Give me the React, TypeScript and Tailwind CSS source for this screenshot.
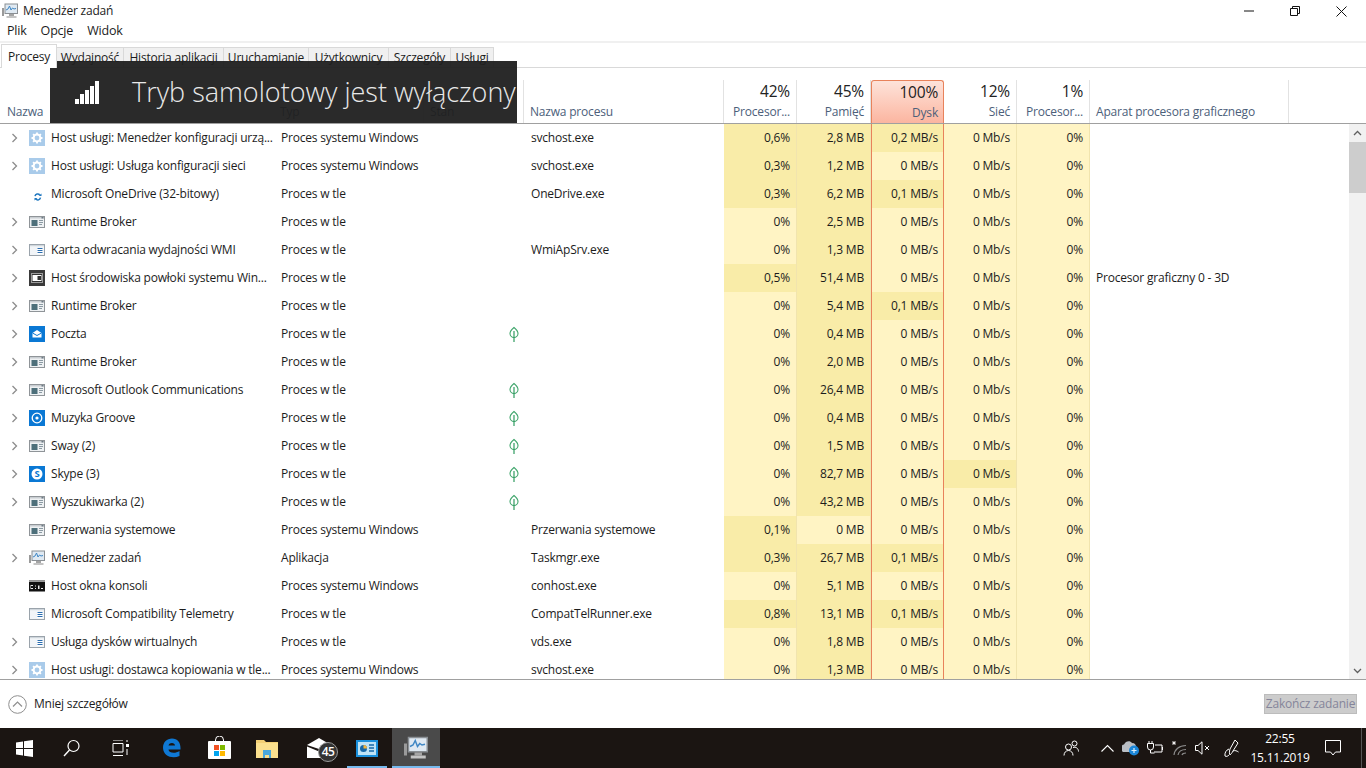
import React from 'react';

type Row = {
  name: string;
  type: string;
  leaf?: boolean;
  proc?: string;
  cpu: string;
  mem: string;
  disk: string;
  netHot?: boolean;
  gpu?: string;
  icon: string;
  arrow?: boolean;
};

const rows: Row[] = [
  { name: 'Host usługi: Menedżer konfiguracji urzą...', type: 'Proces systemu Windows', proc: 'svchost.exe', cpu: '0,6%', mem: '2,8 MB', disk: '0,2 MB/s', icon: 'gear', arrow: true },
  { name: 'Host usługi: Usługa konfiguracji sieci', type: 'Proces systemu Windows', proc: 'svchost.exe', cpu: '0,3%', mem: '1,2 MB', disk: '0 MB/s', icon: 'gear', arrow: true },
  { name: 'Microsoft OneDrive (32-bitowy)', type: 'Proces w tle', proc: 'OneDrive.exe', cpu: '0,3%', mem: '6,2 MB', disk: '0,1 MB/s', icon: 'sync' },
  { name: 'Runtime Broker', type: 'Proces w tle', cpu: '0%', mem: '2,5 MB', disk: '0 MB/s', icon: 'win', arrow: true },
  { name: 'Karta odwracania wydajności WMI', type: 'Proces w tle', proc: 'WmiApSrv.exe', cpu: '0%', mem: '1,3 MB', disk: '0 MB/s', icon: 'wmi', arrow: true },
  { name: 'Host środowiska powłoki systemu Win...', type: 'Proces w tle', cpu: '0,5%', mem: '51,4 MB', disk: '0 MB/s', gpu: 'Procesor graficzny 0 - 3D', icon: 'shell', arrow: true },
  { name: 'Runtime Broker', type: 'Proces w tle', cpu: '0%', mem: '5,4 MB', disk: '0,1 MB/s', icon: 'win', arrow: true },
  { name: 'Poczta', type: 'Proces w tle', leaf: true, cpu: '0%', mem: '0,4 MB', disk: '0 MB/s', icon: 'mail', arrow: true },
  { name: 'Runtime Broker', type: 'Proces w tle', cpu: '0%', mem: '2,0 MB', disk: '0 MB/s', icon: 'win', arrow: true },
  { name: 'Microsoft Outlook Communications', type: 'Proces w tle', leaf: true, cpu: '0%', mem: '26,4 MB', disk: '0 MB/s', icon: 'win', arrow: true },
  { name: 'Muzyka Groove', type: 'Proces w tle', leaf: true, cpu: '0%', mem: '0,4 MB', disk: '0 MB/s', icon: 'groove', arrow: true },
  { name: 'Sway (2)', type: 'Proces w tle', leaf: true, cpu: '0%', mem: '1,5 MB', disk: '0 MB/s', icon: 'win', arrow: true },
  { name: 'Skype (3)', type: 'Proces w tle', leaf: true, cpu: '0%', mem: '82,7 MB', disk: '0 MB/s', netHot: true, icon: 'skype', arrow: true },
  { name: 'Wyszukiwarka (2)', type: 'Proces w tle', leaf: true, cpu: '0%', mem: '43,2 MB', disk: '0 MB/s', icon: 'win', arrow: true },
  { name: 'Przerwania systemowe', type: 'Proces systemu Windows', proc: 'Przerwania systemowe', cpu: '0,1%', mem: '0 MB', disk: '0 MB/s', icon: 'win' },
  { name: 'Menedżer zadań', type: 'Aplikacja', proc: 'Taskmgr.exe', cpu: '0,3%', mem: '26,7 MB', disk: '0,1 MB/s', icon: 'taskmgr', arrow: true },
  { name: 'Host okna konsoli', type: 'Proces systemu Windows', proc: 'conhost.exe', cpu: '0%', mem: '5,1 MB', disk: '0 MB/s', icon: 'console' },
  { name: 'Microsoft Compatibility Telemetry', type: 'Proces w tle', proc: 'CompatTelRunner.exe', cpu: '0,8%', mem: '13,1 MB', disk: '0,1 MB/s', icon: 'wmi' },
  { name: 'Usługa dysków wirtualnych', type: 'Proces w tle', proc: 'vds.exe', cpu: '0%', mem: '1,8 MB', disk: '0 MB/s', icon: 'wmi', arrow: true },
  { name: 'Host usługi: dostawca kopiowania w tle...', type: 'Proces systemu Windows', proc: 'svchost.exe', cpu: '0%', mem: '1,3 MB', disk: '0 MB/s', icon: 'gear', arrow: true },
];

const tabs = ['Wydajność', 'Historia aplikacji', 'Uruchamianie', 'Użytkownicy', 'Szczegóły', 'Usługi'];
const tabWidths = ['w-[67px]', 'w-[100px]', 'w-[85px]', 'w-[80px]', 'w-[62px]', 'w-[43px]'];

const gridCols = 'grid grid-cols-[274px_150px_100px_200px_73px_74px_73px_73px_73px_199px_1fr]';

const TaskmgrIcon = ({ size = 16 }: { size?: number }) => (
  <svg width={size} height={size} viewBox="0 0 16 16">
    <rect x="0" y="5" width="2" height="8" fill="#9a9a9a" />
    <rect x="3" y="1" width="12.5" height="9.5" fill="#dfe9f2" stroke="#8a8f94" />
    <path d="M4 7l2-1 1.5-3 1.5 4 1.5-2 1.5 1 2-.5" fill="none" stroke="#3f87c5" strokeWidth="1" />
    <rect x="7" y="11" width="5" height="2" fill="#a5a5a5" />
    <rect x="4.5" y="13" width="10" height="2" fill="#c4c4c4" />
  </svg>
);

const RowIcon = ({ kind }: { kind: string }) => {
  if (kind === 'gear')
    return (
      <svg width="16" height="16" viewBox="0 0 16 16">
        <rect width="16" height="16" fill="#a9cbea" />
        <circle cx="8" cy="8" r="3.4" fill="none" stroke="#fff" strokeWidth="2" />
        <path d="M8 2.5v2M8 11.5v2M2.500 8h2M11.500 8h2M4.100 4.100l1.400 1.400M10.500 10.500l1.400 1.400M4.100 11.900l1.400-1.400M10.500 5.500l1.400-1.400" stroke="#fff" strokeWidth="1.800" />
      </svg>
    );
  if (kind === 'sync')
    return (
      <svg width="16" height="16" viewBox="0 0 16 16">
        <path d="M6 10.200a2.800 2.800 0 0 1 4.800-1.400" fill="none" stroke="#1f77c0" strokeWidth="1.500" />
        <path d="M12 12.200a2.800 2.800 0 0 1-4.800 1.400" fill="none" stroke="#1f77c0" strokeWidth="1.500" transform="translate(-.5 -.5)" />
        <path d="M9.500 10h3V7.500zM8.500 12h-3v2.500z" fill="#1f77c0" />
      </svg>
    );
  if (kind === 'win')
    return (
      <svg width="16" height="16" viewBox="0 0 16 16">
        <rect x=".5" y="2.500" width="15" height="11" fill="#eef1f3" stroke="#8f9498" />
        <rect x="1" y="3" width="14" height="1.500" fill="#c9ced2" />
        <rect x="2.500" y="6" width="6" height="6" fill="#4d6f7a" />
        <path d="M10 6.500h4M10 8.500h4M10 10.500h3" stroke="#8b9aa3" />
        <rect x="12.500" y="3" width="2" height="1.500" fill="#6c7a84" />
      </svg>
    );
  if (kind === 'wmi')
    return (
      <svg width="16" height="16" viewBox="0 0 16 16">
        <rect x=".5" y="2.500" width="15" height="11" fill="#f2f5f8" stroke="#9aa3ab" />
        <rect x="1" y="3" width="14" height="1.200" fill="#cfd6dc" />
        <rect x="8" y="6" width="5.500" height="6" fill="#fff" />
        <path d="M8.500 6.500h5M8.500 8.500h5M8.500 10.500h5" stroke="#2a6db0" strokeWidth="1.200" />
      </svg>
    );
  if (kind === 'shell')
    return (
      <svg width="16" height="16" viewBox="0 0 16 16">
        <rect width="16" height="16" fill="#3a3a3a" />
        <rect x="2" y="3.500" width="12" height="9" fill="#fff" />
        <rect x="3" y="4.500" width="10" height="7" fill="none" stroke="#333" />
        <rect x="8.500" y="6" width="3.500" height="4" fill="#333" />
      </svg>
    );
  if (kind === 'mail')
    return (
      <svg width="16" height="16" viewBox="0 0 16 16">
        <rect width="16" height="16" fill="#0a78d4" />
        <path d="M3.500 7l4.500-3 4.500 3v4.500h-9z" fill="#fff" />
        <path d="M3.500 7L8 9.500 12.500 7" fill="none" stroke="#0a78d4" />
      </svg>
    );
  if (kind === 'groove')
    return (
      <svg width="16" height="16" viewBox="0 0 16 16">
        <rect width="16" height="16" fill="#0a78d4" />
        <circle cx="8" cy="8" r="4.800" fill="none" stroke="#fff" strokeWidth="1.300" />
        <circle cx="8" cy="8" r="1.600" fill="#fff" />
      </svg>
    );
  if (kind === 'skype')
    return (
      <svg width="16" height="16" viewBox="0 0 16 16">
        <rect width="16" height="16" fill="#0a78d4" />
        <circle cx="8" cy="8" r="5.500" fill="#fff" />
        <text x="8" y="11.300" textAnchor="middle" fontSize="9.500" fontWeight="700" fontFamily="'Open Sans', sans-serif" fill="#0a78d4">S</text>
      </svg>
    );
  if (kind === 'console')
    return (
      <svg width="16" height="16" viewBox="0 0 16 16">
        <rect y="2.500" width="16" height="11" fill="#111" />
        <rect y="2.500" width="16" height="1.500" fill="#9b9b9b" />
        <path d="M2 7h2v1H2v2h2v1H1.500V7zM6 7.500h1v1H6zM6 10h1v1H6zM9 7.500h1.500v3.500H9zM12 10h2v1h-2z" fill="#e8e8e8" />
      </svg>
    );
  return <TaskmgrIcon />;
};

const Leaf = () => (
  <svg width="12" height="17" viewBox="0 0 12 17">
    <path d="M6 1.500C8.500 3.500 10 5.500 10 7.500 10 10 8 11.500 6 11.500S2 10 2 7.500C2 5.500 3.500 3.500 6 1.500z" fill="none" stroke="#3fa56b" strokeWidth="1.100" />
    <path d="M6 5v11" stroke="#2f9b5f" strokeWidth="1.200" />
  </svg>
);

const Chevron = () => (
  <svg width="7" height="10" viewBox="0 0 7 10">
    <path d="M1.500 1l4 4-4 4" fill="none" stroke="#8c8c8c" strokeWidth="1.300" />
  </svg>
);

const Head = ({ pct, label, hot }: { pct: string; label: string; hot?: boolean }) => (
  <div
    className={
      hot
        ? 'flex h-[43px] flex-col items-end rounded-t-[3px] border border-b-0 border-[#e8825b] bg-gradient-to-b from-[#fde3da] to-[#fbb5a0] pr-[5px]'
        : 'flex h-[43px] flex-col items-end border-r border-[#e2e2e2] pr-[6px]'
    }
  >
    <span className="text-[15.500px] leading-[22px] text-[#222]">{pct}</span>
    <span className="mt-[1px] text-[12px] leading-[17px] text-[#4c607a]">{label}</span>
  </div>
);

const Label = ({ text, left }: { text: string; left?: boolean }) => (
  <div className={left ? 'flex h-[43px] items-end pb-[3px] pl-[7px] text-[12px] leading-[17px] text-[#4c607a]' : 'flex h-[43px] items-end border-r border-[#e2e2e2] pb-[3px] pl-[6px] text-[12px] leading-[17px] text-[#4c607a]'}>
    {text}
  </div>
);

const Heat = ({ value, dark, disk }: { value: string; dark: boolean; disk?: boolean }) => (
  <div
    className={`flex items-center justify-end ${dark ? 'bg-[#f9eca8]' : 'bg-[#fff4c4]'} ${
      disk ? 'border-x border-[#e8825b] pr-[5px]' : 'border-r border-[#f1e4ae] pr-[6px]'
    }`}
  >
    {value}
  </div>
);

const TaskBtn = ({ children, active, open, className }: { children: React.ReactNode; active?: boolean; open?: boolean; className?: string }) => (
  <div className={`relative flex h-10 w-12 items-center justify-center ${active ? 'bg-[#4a4a4a]' : ''} ${className ?? ''}`}>
    {children}
    {open && <div className={`absolute bottom-0 h-[2px] bg-[#76b9ed] ${active ? 'inset-x-0' : 'inset-x-1'}`} />}
  </div>
);

export default function App() {
  return (
    <div className="flex h-screen w-[1366px] flex-col overflow-hidden bg-white font-['Open_Sans',sans-serif] text-[12px] tracking-[-0.2px] text-[#1c1c1c]">
      {/* title bar */}
      <div className="flex h-[22px] shrink-0 items-center pl-[2px] pr-[2px]">
        <TaskmgrIcon size={16} />
        <span className="ml-[5px]">Menedżer zadań</span>
        <div className="ml-auto flex">
          <div className="flex h-[22px] w-[46px] items-center justify-center">
            <svg width="10" height="10" viewBox="0 0 10 10"><path d="M0 5h10" stroke="#111" /></svg>
          </div>
          <div className="flex h-[22px] w-[46px] items-center justify-center">
            <svg width="10" height="10" viewBox="0 0 10 10"><path d="M.5 2.500h7v7h-7zM2.500 2.500v-2h7v7h-2" fill="none" stroke="#111" /></svg>
          </div>
          <div className="flex h-[22px] w-[46px] items-center justify-center">
            <svg width="11" height="11" viewBox="0 0 11 11"><path d="M.5.5l10 10M10.500.5l-10 10" stroke="#111" /></svg>
          </div>
        </div>
      </div>

      {/* menu */}
      <div className="flex h-[21px] shrink-0 items-center gap-[14px] border-b-2 border-[#f0f0f0] pl-[7px] text-[12.500px]">
        <span>Plik</span>
        <span>Opcje</span>
        <span>Widok</span>
      </div>

      {/* tabs */}
      <div className="flex h-[25px] shrink-0 items-end border-b border-[#d9d9d9] pl-[1px]">
        <div className="z-10 -mb-px flex h-[24px] w-[56px] items-center justify-center border border-b-0 border-[#d9d9d9] bg-white">Procesy</div>
        {tabs.map((t, i) => (
          <div key={t} className={`flex h-[20px] items-center justify-center border-r border-t border-[#d9d9d9] bg-[#f0f0f0] ${tabWidths[i]}`}>
            {t}
          </div>
        ))}
      </div>

      {/* column headers */}
      <div className={`${gridCols} h-[56px] shrink-0 items-end border-b border-[#a0a0a0] pb-0`}>
        <Label text="Nazwa" left />
        <Label text="Typ" />
        <Label text="Stan" />
        <Label text="Nazwa procesu" />
        <Head pct="42%" label="Procesor..." />
        <Head pct="45%" label="Pamięć" />
        <Head pct="100%" label="Dysk" hot />
        <Head pct="12%" label="Sieć" />
        <Head pct="1%" label="Procesor..." />
        <Label text="Aparat procesora graficznego" />
      </div>

      {/* process list */}
      <div className="flex min-h-0 flex-1 border-b border-[#a0a0a0]">
        <div className="min-w-0 flex-1 overflow-hidden">
          {rows.map((r, i) => (
            <div key={i} className={`${gridCols} h-7`}>
              <div className="flex items-center whitespace-nowrap">
                <div className="flex w-[29px] justify-center pl-[-1px]">{r.arrow && <Chevron />}</div>
                <RowIcon kind={r.icon} />
                <span className="ml-[6px]">{r.name}</span>
              </div>
              <div className="flex items-center pl-[7px]">{r.type}</div>
              <div className="flex items-center justify-end pr-[4px]">{r.leaf && <Leaf />}</div>
              <div className="flex items-center pl-[7px]">{r.proc}</div>
              <Heat value={r.cpu} dark={r.cpu !== '0%'} />
              <Heat value={r.mem} dark={r.mem !== '0 MB'} />
              <Heat value={r.disk} dark={r.disk !== '0 MB/s'} disk />
              <Heat value="0 Mb/s" dark={!!r.netHot} />
              <Heat value="0%" dark={false} />
              <div className="flex items-center whitespace-nowrap pl-[6px]">{r.gpu}</div>
            </div>
          ))}
        </div>
        {/* scrollbar */}
        <div className="flex w-[17px] shrink-0 flex-col bg-[#f1f1f1]">
          <div className="flex h-[17px] items-center justify-center">
            <svg width="9" height="6" viewBox="0 0 9 6"><path d="M1 5l3.500-3.500L8 5" fill="none" stroke="#606060" strokeWidth="1.300" /></svg>
          </div>
          <div className="mt-px h-[51px] bg-[#cdcdcd]" />
          <div className="mt-auto flex h-[17px] items-center justify-center">
            <svg width="9" height="6" viewBox="0 0 9 6"><path d="M1 1l3.500 3.500L8 1" fill="none" stroke="#606060" strokeWidth="1.300" /></svg>
          </div>
        </div>
      </div>

      {/* footer */}
      <div className="flex h-[48px] shrink-0 items-center pl-[8px] pr-[9px]">
        <svg width="19" height="19" viewBox="0 0 19 19">
          <circle cx="9.500" cy="9.500" r="8.800" fill="none" stroke="#8f8f8f" />
          <path d="M5 11.500l4.500-4.500 4.500 4.500" fill="none" stroke="#8f8f8f" strokeWidth="1.200" />
        </svg>
        <span className="ml-[7px]">Mniej szczegółów</span>
        <div className="ml-auto flex h-[20px] w-[93px] items-center justify-center border border-[#bcbcbc] bg-[#cccccc] text-[#85859a]">Zakończ zadanie</div>
      </div>

      {/* taskbar */}
      <div className="flex h-10 shrink-0 items-center bg-[#1b1512] text-white">
        <TaskBtn>
          <svg width="17" height="17" viewBox="0 0 17 17"><path d="M0 2.400l7-1v6.600H0zM8 1.200l9-1.200v8H8zM0 9h7v6.600l-7-1zM8 9h9v8l-9-1.200z" fill="#fff" /></svg>
        </TaskBtn>
        <TaskBtn>
          <svg width="18" height="18" viewBox="0 0 18 18"><circle cx="10.500" cy="7" r="5.500" fill="none" stroke="#fff" strokeWidth="1.200" /><path d="M6.500 11L1 17" stroke="#fff" strokeWidth="1.400" /></svg>
        </TaskBtn>
        <TaskBtn>
          <svg width="17" height="16" viewBox="0 0 17 16"><path d="M1 0h10M1 15.500h10M1 3.500h10v8.500H1z" fill="none" stroke="#fff" /><rect x="14" y="4" width="3" height="3" fill="#fff" /><path d="M15 0v2M15 9v6" stroke="#fff" /></svg>
        </TaskBtn>
        <TaskBtn className="ml-[3px]">
          <svg width="21" height="22" viewBox="0 0 21 22"><path d="M2 11C2 5 6 1.500 11 1.500c5.500 0 8.500 4 8.500 9.500v1.500H7.500c.3 3.500 6.500 4.500 11 1.500v5c-7 3-16 .5-16.500-8z M7.500 8.500h6.500C14 5.500 8.500 5 7.500 8.500z" fill="#0f78d4" fillRule="evenodd" /></svg>
        </TaskBtn>
        <TaskBtn>
          <svg width="23" height="24" viewBox="0 0 23 24">
            <path d="M7.500 6V4a4 4 0 0 1 8 0v2" fill="none" stroke="#fff" />
            <rect y="5" width="23" height="18" rx="1" fill="#fff" />
            <rect x="6" y="9" width="5" height="5" fill="#f25022" />
            <rect x="12" y="9" width="5" height="5" fill="#7fba00" />
            <rect x="6" y="15" width="5" height="5" fill="#00a4ef" />
            <rect x="12" y="15" width="5" height="5" fill="#ffb900" />
          </svg>
        </TaskBtn>
        <TaskBtn>
          <svg width="22" height="19" viewBox="0 0 22 19">
            <path d="M0 1h8l2 2h12v16H0z" fill="#f3cf74" />
            <rect x="0" y="4" width="22" height="15" fill="#fbe08e" />
            <path d="M7 19v-6h8v6h-2v-3H9v3z" fill="#4aa8dd" />
            <rect x="7" y="11" width="8" height="3" fill="#4aa8dd" />
          </svg>
        </TaskBtn>
        <TaskBtn className="ml-1">
          <svg width="24" height="20" viewBox="0 0 24 20"><path d="M12 0l12 7-12 4L0 7z" fill="#fff" /><path d="M0 8.500l12 5 12-5V20H0z" fill="#fff" /></svg>
          <div className="absolute left-[23px] top-[14px] flex h-[20px] w-[20px] items-center justify-center rounded-full border border-[#9a9a9a] bg-[#333] text-[12px] font-semibold tracking-[-0.5px]">45</div>
        </TaskBtn>
        <TaskBtn open>
          <svg width="22" height="17" viewBox="0 0 22 17">
            <rect width="22" height="17" fill="#1a90dc" />
            <rect x="2" y="2" width="18" height="13" fill="#bfe3f5" />
            <circle cx="7.500" cy="8.500" r="3.500" fill="#1668a8" />
            <path d="M7.500 8.500V5a3.500 3.500 0 0 1 3.500 3.500z" fill="#f3b53a" />
            <path d="M13 5h5M13 8h5M13 11h5" stroke="#1668a8" strokeWidth="1.300" />
          </svg>
        </TaskBtn>
        <TaskBtn active open className="ml-px">
          <TaskmgrIcon size={24} />
        </TaskBtn>

        {/* tray */}
        <div className="ml-auto flex h-10 items-center">
          <div className="flex w-8 justify-center">
            <svg width="16" height="16" viewBox="0 0 16 16"><circle cx="5.500" cy="7" r="3" fill="none" stroke="#fff" /><path d="M1 15.500c0-3 2-5 4.500-5s4.500 2 4.500 5" fill="none" stroke="#fff" /><circle cx="11.500" cy="3.500" r="2.500" fill="none" stroke="#fff" /><path d="M10 7.500c3-1 5.500 1 5.500 4" fill="none" stroke="#fff" /></svg>
          </div>
          <div className="ml-2 flex w-6 justify-center">
            <svg width="13" height="8" viewBox="0 0 13 8"><path d="M.5 7.500l6-6 6 6" fill="none" stroke="#fff" strokeWidth="1.100" /></svg>
          </div>
          <div className="flex w-6 justify-center">
            <svg width="18" height="16" viewBox="0 0 18 16"><path d="M1 12a4 4 0 0 1 1-7.500C3.500 1 8 0 10 3c3 0 4 2 4 4H9v5z" fill="#b9bec4" /><circle cx="12" cy="10.500" r="5" fill="#1a86d8" /><path d="M9.500 10.500h5M12 8v5" stroke="#dff0fb" strokeWidth="1.200" /></svg>
          </div>
          <div className="flex w-6 justify-center">
            <svg width="16" height="14" viewBox="0 0 16 14"><path d="M2 0v2M5 0v2M.5 2.500h6V6a3 3 0 0 1-6 0zM3.500 9v3h4" fill="none" stroke="#fff" /><path d="M8 4h7v7H7" fill="none" stroke="#fff" /><rect x="15" y="6" width="1" height="3" fill="#fff" /></svg>
          </div>
          <div className="flex w-6 justify-center">
            <svg width="16" height="16" viewBox="0 0 16 16"><path d="M3 15C3.500 9.500 8 5.500 15 5.500M7 15c.5-3 3-5.500 8-5.500M11 15c.3-1 1.500-2 4-2" fill="none" stroke="#8b8b8b" strokeWidth="1.200" /><path d="M3 1v4M1 3h4M1.500 1.500l3 3M4.500 1.500l-3 3" stroke="#fff" strokeWidth=".8" /></svg>
          </div>
          <div className="flex w-6 justify-center">
            <svg width="16" height="14" viewBox="0 0 16 14"><path d="M.5 4.500H3L7 .8v12.400L3 9.500H.5z" fill="none" stroke="#fff" /><path d="M10 5l4 4M14 5l-4 4" stroke="#fff" /></svg>
          </div>
          <div className="flex w-[34px] justify-center">
            <svg width="16" height="19" viewBox="0 0 16 19"><path d="M11 1L6 10c-1 3-.5 5 0 6 1-1 2-2 3-4l5-8zM9 12c2-1 4 0 5.500 1M5 10C2 11 .5 14 1 17c1.500 1 3 0 4-1" fill="none" stroke="#fff" /></svg>
          </div>
          <div className="flex w-[62px] flex-col items-center text-[12px] leading-[19px]">
            <span>22:55</span>
            <span>15.11.2019</span>
          </div>
          <div className="flex w-[44px] justify-center">
            <svg width="16" height="16" viewBox="0 0 16 16"><path d="M.5.5h15v11.500h-5L8 15l-2.500-3H.5z" fill="none" stroke="#fff" /></svg>
          </div>
          <div className="ml-[6px] h-10 w-[5px] border-l border-[#555]" />
        </div>
      </div>

      {/* airplane mode toast */}
      <div className="absolute left-[50px] top-[61px] flex h-[62px] w-[467px] items-center bg-[#1f1f1f]/95 pl-[25px]">
        <svg width="25" height="23" viewBox="0 0 25 23">
          <rect x="0" y="18" width="4" height="5" fill="#fff" />
          <rect x="5" y="13" width="4" height="10" fill="#fff" />
          <rect x="10" y="9" width="4" height="14" fill="#fff" />
          <rect x="15" y="5" width="4" height="18" fill="#fff" />
          <rect x="20" y="0" width="4" height="23" fill="#fff" />
        </svg>
        <span className="ml-[32px] whitespace-nowrap text-[27px] font-light tracking-normal text-[#e8e8e8]">Tryb samolotowy jest wyłączony</span>
      </div>
    </div>
  );
}
